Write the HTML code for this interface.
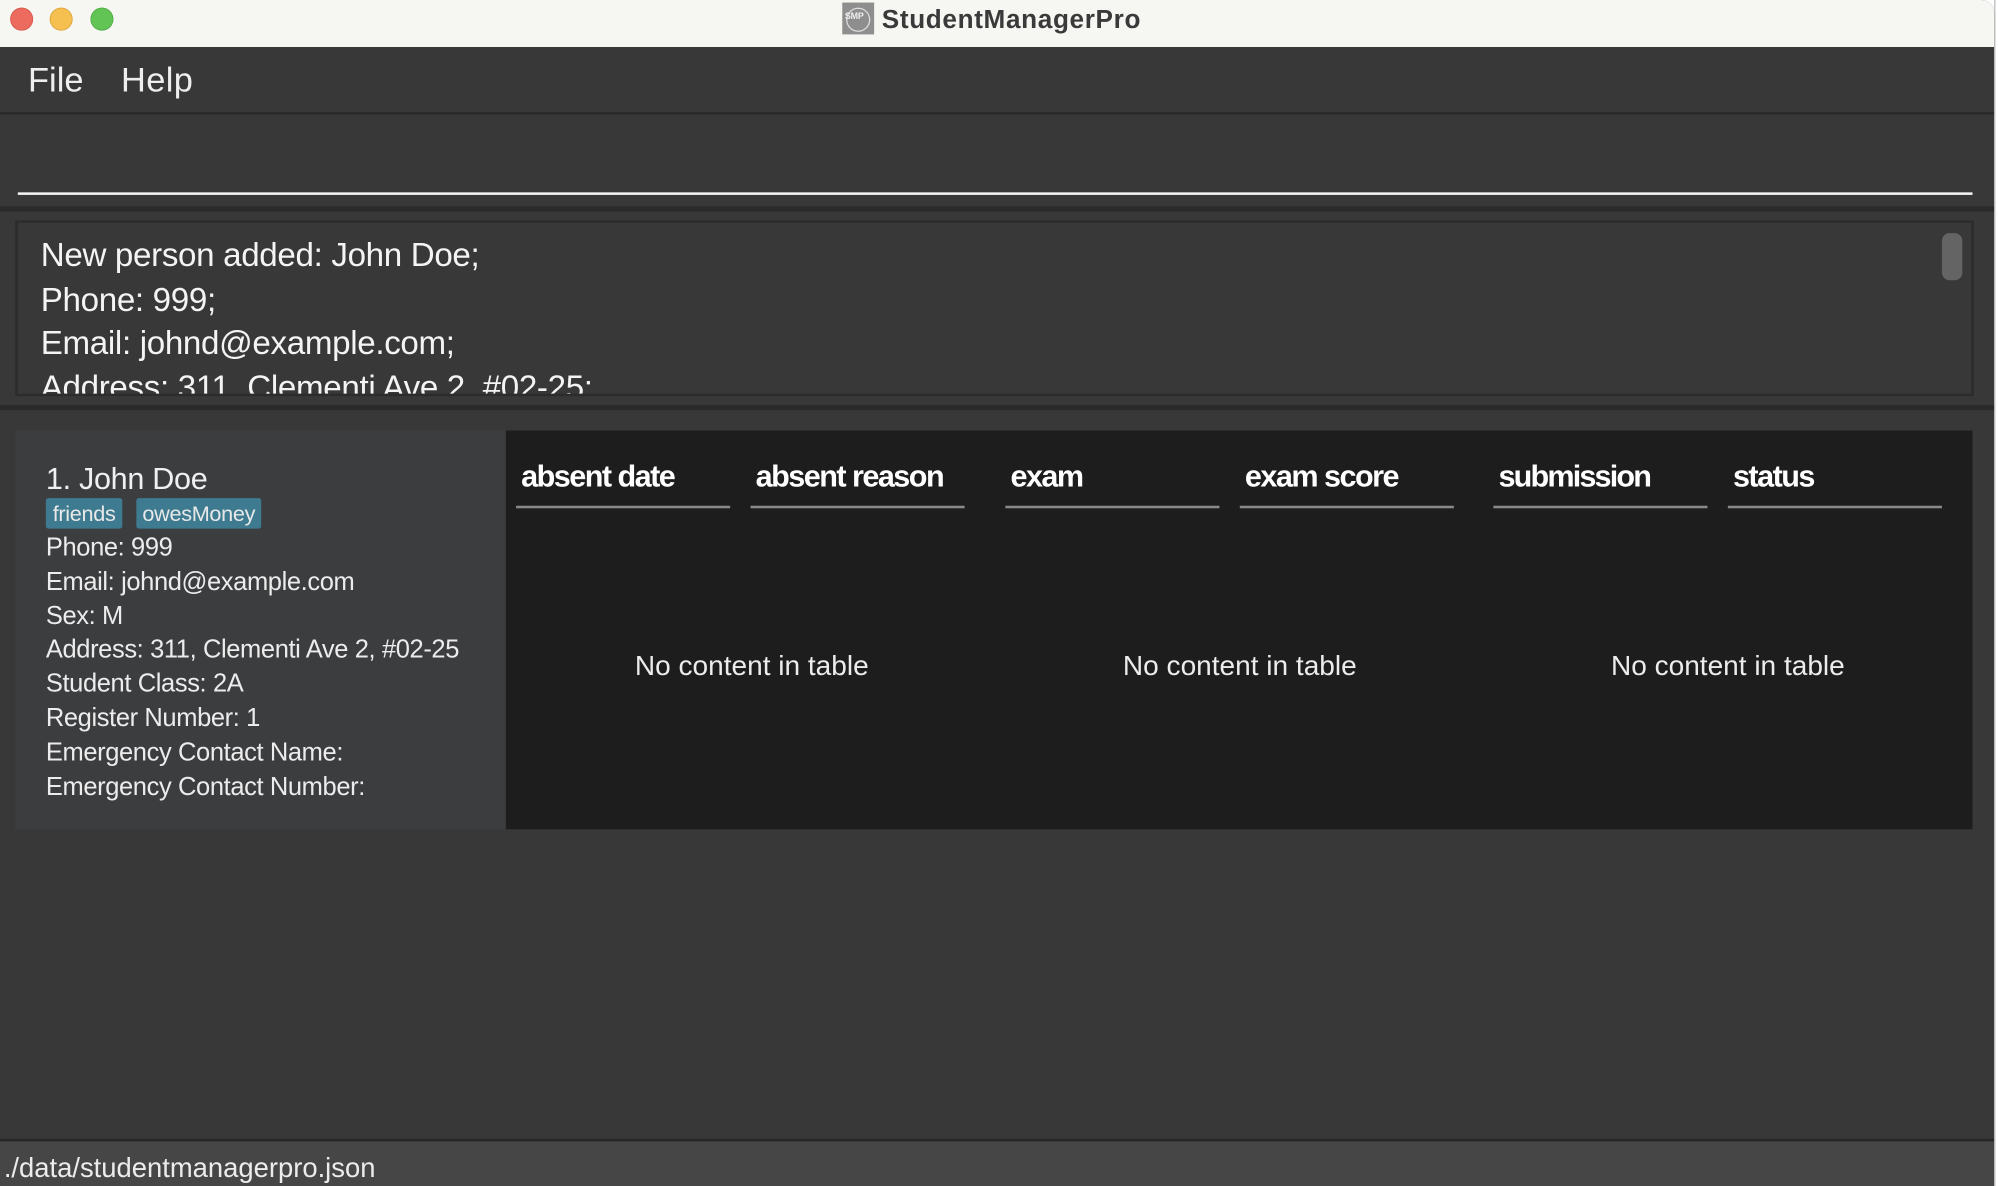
<!DOCTYPE html>
<html><head><meta charset="utf-8"><style>
html,body{margin:0;padding:0;background:#fff;overflow:hidden}
#w{position:absolute;left:0;top:0;width:1568px;height:931px;transform:scale(1.27423,1.27390);transform-origin:0 0;font-family:"Liberation Sans",sans-serif;color:#f0f0f0}
.a{position:absolute}
.t{white-space:nowrap;letter-spacing:-0.015em}
</style></head><body><div id="w">
<div class="a" style="left:0;top:0;width:1565px;height:931px;background:#383838;border-top-right-radius:10px;overflow:hidden">
 <div class="a" style="left:0;top:0;width:1565px;height:37px;background:#f6f6f2;border-bottom:1.5px solid #1a1a1a"></div>
 <div class="a" style="left:7.6px;top:6.3px;width:18px;height:18px;border-radius:50%;background:#ec6a5e;box-shadow:inset 0 0 0 0.6px #d05548"></div>
 <div class="a" style="left:39px;top:6.3px;width:18px;height:18px;border-radius:50%;background:#f5c04f;box-shadow:inset 0 0 0 0.6px #d9a13c"></div>
 <div class="a" style="left:70.6px;top:6.3px;width:18px;height:18px;border-radius:50%;background:#61c454;box-shadow:inset 0 0 0 0.6px #4ea843"></div>
 <div class="a" style="left:661px;top:2px;width:25px;height:25px;background:#8e8e8e"><div class="a" style="left:3px;top:4px;width:17px;height:17px;border-radius:50%;border:1px solid #ddd"></div><div class="a t" style="left:2px;top:8px;font-size:7px;color:#eee;font-weight:bold">SMP</div></div>
 <div class="a t" style="left:692px;top:4px;font-size:20.5px;font-weight:bold;color:#3a3a3a;letter-spacing:0.025em">StudentManagerPro</div>
 <div class="a t" style="left:22px;top:48px;font-size:27px;color:#eee;letter-spacing:0">File</div>
 <div class="a t" style="left:95px;top:48px;font-size:27px;color:#eee;letter-spacing:0.01em">Help</div>
 <div class="a" style="left:0;top:88px;width:1565px;height:2px;background:#2a2a2a"></div>
 <div class="a" style="left:14px;top:151px;width:1534px;height:2px;background:#f4f4f4"></div>
 <div class="a" style="left:0;top:162px;width:1565px;height:4px;background:#2a2a2a"></div>
 <div class="a" style="left:12px;top:173px;width:1533px;height:134px;border:2px solid #2c2c2c;background:#383838;overflow:hidden">
  <div class="a t" style="left:18px;top:8px;font-size:26px;line-height:34.6px;color:#f4f4f4;letter-spacing:-0.01em">New person added: John Doe;<br>Phone: 999;<br>Email: johnd@example.com;<br>Address: 311, Clementi Ave 2, #02-25;</div>
  <div class="a" style="left:1510px;top:8px;width:16px;height:37px;border-radius:6px;background:#646464"></div>
 </div>
 <div class="a" style="left:0;top:318px;width:1565px;height:4px;background:#2a2a2a"></div>
 <div class="a" style="left:12px;top:338px;width:385px;height:313px;background:#3c3d3f"></div>
 <div class="a" style="left:397px;top:338px;width:1151px;height:313px;background:#1d1d1d"></div>
 <div class="a t" style="left:36px;top:363px;font-size:24px;color:#f0f0f0;letter-spacing:-0.01em">1. John Doe</div>
 <div class="a t" style="left:36px;top:391px;width:60px;height:24px;border-radius:2px;background:#3e7b91;font-size:17px;line-height:25px;text-align:center;color:#e8e8e8">friends</div>
 <div class="a t" style="left:107px;top:391px;width:98px;height:24px;border-radius:2px;background:#3e7b91;font-size:17px;line-height:25px;text-align:center;color:#e8e8e8">owesMoney</div>
 <div class="a t" style="left:36px;top:417px;font-size:20px;line-height:26.8px;color:#ececec;letter-spacing:-0.015em">Phone: 999<br>Email: johnd@example.com<br>Sex: M<br>Address: 311, Clementi Ave 2, #02-25<br>Student Class: 2A<br>Register Number: 1<br>Emergency Contact Name:<br>Emergency Contact Number:</div>
 <div class="a t" style="left:409px;top:361px;font-size:24px;font-weight:bold;color:#fff;letter-spacing:-0.05em">absent date</div>
 <div class="a t" style="left:593px;top:361px;font-size:24px;font-weight:bold;color:#fff;letter-spacing:-0.05em">absent reason</div>
 <div class="a t" style="left:793px;top:361px;font-size:24px;font-weight:bold;color:#fff;letter-spacing:-0.05em">exam</div>
 <div class="a t" style="left:977px;top:361px;font-size:24px;font-weight:bold;color:#fff;letter-spacing:-0.05em">exam score</div>
 <div class="a t" style="left:1176px;top:361px;font-size:24px;font-weight:bold;color:#fff;letter-spacing:-0.06em">submission</div>
 <div class="a t" style="left:1360px;top:361px;font-size:24px;font-weight:bold;color:#fff;letter-spacing:-0.05em">status</div>
 <div class="a" style="left:405px;top:397px;width:168px;height:2px;background:#8a8a8a"></div>
 <div class="a" style="left:589px;top:397px;width:168px;height:2px;background:#8a8a8a"></div>
 <div class="a" style="left:789px;top:397px;width:168px;height:2px;background:#8a8a8a"></div>
 <div class="a" style="left:973px;top:397px;width:168px;height:2px;background:#8a8a8a"></div>
 <div class="a" style="left:1172px;top:397px;width:168px;height:2px;background:#8a8a8a"></div>
 <div class="a" style="left:1356px;top:397px;width:168px;height:2px;background:#8a8a8a"></div>
 <div class="a t" style="left:440px;top:510px;width:300px;text-align:center;font-size:22px;color:#ececec;letter-spacing:0">No content in table</div>
 <div class="a t" style="left:823px;top:510px;width:300px;text-align:center;font-size:22px;color:#ececec;letter-spacing:0">No content in table</div>
 <div class="a t" style="left:1206px;top:510px;width:300px;text-align:center;font-size:22px;color:#ececec;letter-spacing:0">No content in table</div>
 <div class="a" style="left:0;top:894px;width:1565px;height:2px;background:#262626"></div>
 <div class="a" style="left:0;top:896px;width:1565px;height:35px;background:#464646"></div>
 <div class="a t" style="left:3px;top:905px;font-size:21.5px;color:#ececec;letter-spacing:0">./data/studentmanagerpro.json</div>
</div>
<div class="a" style="left:1565px;top:0;width:1px;height:931px;background:#bbb"></div>
</div></body></html>
